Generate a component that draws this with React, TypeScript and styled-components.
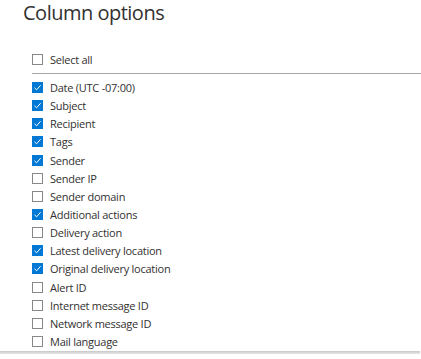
import styled, { createGlobalStyle } from "styled-components";

const GlobalStyle = createGlobalStyle`
  body {
    margin: 0;
    background: #ffffff;
    font-family: "Open Sans", "Noto Sans", sans-serif;
    color: #323130;
  }
`;

const Panel = styled.div`
  width: 421px;
  height: 359px;
  overflow: hidden;
  display: flex;
  flex-direction: column;
`;

const Title = styled.h1`
  margin: 0;
  padding: 0 0 0 23px;
  height: 30px;
  font-size: 20px;
  line-height: 25px;
  letter-spacing: -0.5px;
  font-weight: 400;
  color: #323130;
`;

const SelectAllRow = styled.div`
  margin: 24px 0 0 32px;
  padding-bottom: 5px;
  border-bottom: 1px solid #a6a6a6;
`;

const List = styled.div`
  display: flex;
  flex-direction: column;
  padding: 4px 0 0 32px;
`;

const Item = styled.label`
  display: flex;
  align-items: center;
  gap: 7px;
  height: 18.15px;
  font-size: 11px;
  letter-spacing: -0.25px;
  color: #323130;
  white-space: nowrap;
`;

const Box = styled.span<{ $checked: boolean }>`
  width: 11px;
  height: 11px;
  box-sizing: border-box;
  flex-shrink: 0;
  display: flex;
  align-items: center;
  justify-content: center;
  border: 1px solid ${(p) => (p.$checked ? "#0078d4" : "#8a8886")};
  background: ${(p) => (p.$checked ? "#0078d4" : "#ffffff")};
`;

const Footer = styled.div`
  margin-top: auto;
  margin-bottom: 5px;
  height: 4px;
  width: 420px;
  background: linear-gradient(#c8c8c8, #e6e6e6);
`;

const columns: [string, boolean][] = [
  ["Date (UTC -07:00)", true],
  ["Subject", true],
  ["Recipient", true],
  ["Tags", true],
  ["Sender", true],
  ["Sender IP", false],
  ["Sender domain", false],
  ["Additional actions", true],
  ["Delivery action", false],
  ["Latest delivery location", true],
  ["Original delivery location", true],
  ["Alert ID", false],
  ["Internet message ID", false],
  ["Network message ID", false],
  ["Mail language", false],
];

function Check({ checked }: { checked: boolean }) {
  return (
    <Box $checked={checked}>
      {checked && (
        <svg width="9" height="9" viewBox="0 0 9 9">
          <path d="M1.5 4.8 L3.6 6.8 L7.6 2.2" fill="none" stroke="#ffffff" strokeWidth="1" />
        </svg>
      )}
    </Box>
  );
}

export default function App() {
  return (
    <>
      <GlobalStyle />
      <Panel>
        <Title>Column options</Title>
        <SelectAllRow>
          <Item>
            <Check checked={false} />
            Select all
          </Item>
        </SelectAllRow>
        <List>
          {columns.map(([name, on]) => (
            <Item key={name}>
              <Check checked={on} />
              {name}
            </Item>
          ))}
        </List>
        <Footer />
      </Panel>
    </>
  );
}
